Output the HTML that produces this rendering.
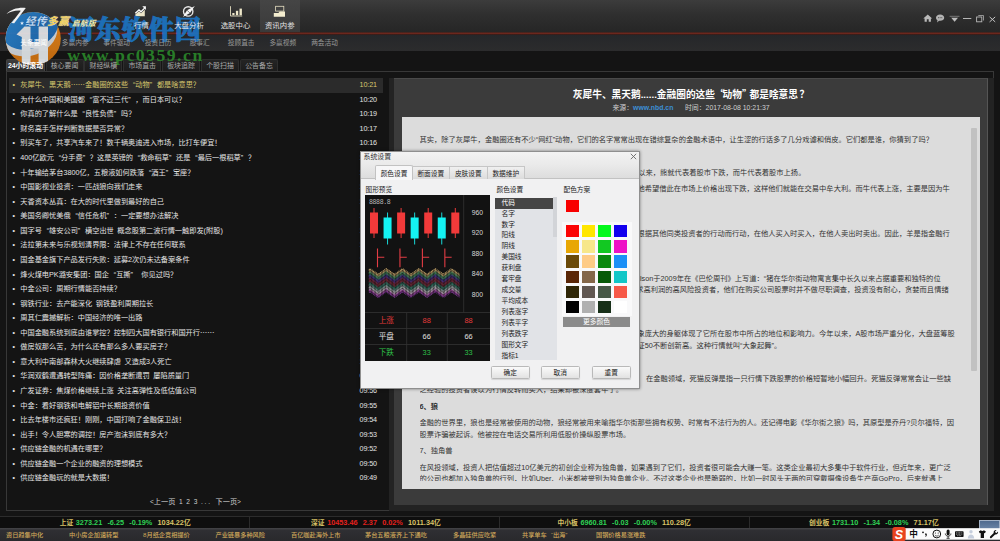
<!DOCTYPE html>
<html lang="zh-CN">
<head>
<meta charset="utf-8">
<title>经传多赢 启航版 - 资讯内参</title>
<style>
*{box-sizing:border-box;margin:0;padding:0}
html,body{width:1000px;height:541px;overflow:hidden;background:#141414}
body{position:relative;font-family:"Liberation Sans","Noto Sans CJK SC",sans-serif;font-size:7.2px;color:#ddd;-webkit-text-size-adjust:none}
i{font-style:normal}
.abs{position:absolute}
/* ---------- top bar ---------- */
#top{position:absolute;left:0;top:0;width:1000px;height:32px;background:linear-gradient(#3c3c3c,#2f2f2f 45%,#262626)}
#redline{position:absolute;left:0;top:31.6px;width:1000px;height:3.6px;background:linear-gradient(#2c1f1d,#762a1f 42%,#5a211a 64%,#1e1a1a)}
#brand{z-index:5;position:absolute;left:25px;top:14.600px;font-size:10.600px;font-weight:bold;font-style:italic;color:#bcd6f0;text-shadow:0 0 1px #1b4f86,0 0 1px #1b4f86;letter-spacing:.5px;white-space:nowrap;line-height:12px}
#brand i{font-style:italic;color:#f1cf58;text-shadow:0 0 1px #fff}
#brand2{z-index:5;position:absolute;left:72px;top:18.600px;font-size:7.600px;font-weight:bold;font-style:italic;color:#f2ecb0;letter-spacing:.4px;white-space:nowrap;line-height:9px}
.nav{position:absolute;top:0;height:32px;width:40px;text-align:center;color:#f2f2f2;font-size:7.4px;white-space:nowrap}
.nav span{z-index:3;opacity:.92;position:absolute;left:0;right:0;top:21px;line-height:10px}
.nav svg{position:absolute;left:13px;top:5px}
.nav.on{background:linear-gradient(#454545,#3a3a3a)}
#winbtn{position:absolute;left:918px;top:10px}
/* ---------- sub nav ---------- */
#sub{position:absolute;left:0;top:35px;width:1000px;height:15.5px;background:linear-gradient(#25272a,#2c2c2d)}
#sub span{z-index:3;position:absolute;top:0;width:42px;text-align:center;line-height:15.5px;font-size:6.7px;color:#9a9a9a;white-space:nowrap}
#sub span.on{color:#fff}
/* ---------- tabs ---------- */
#tabs{position:absolute;left:6px;top:59px;height:12px;white-space:nowrap}
.tab{position:absolute;top:0;height:12px;width:38px;border:1px solid #2e2e2e;border-bottom:none;border-radius:2px 2px 0 0;background:linear-gradient(#242424,#1c1c1c);color:#a9a9a9;text-align:center;line-height:11px;font-size:6.9px}
.tab span{position:relative;z-index:3}
.tab.on{background:linear-gradient(#3d3d3d,#303030);border-color:#444;color:#fff;font-weight:bold}
#frame{position:absolute;left:6px;top:71px;width:988px;height:440px;border:1px solid #383838;background:#141414}
/* ---------- list ---------- */
#list{position:absolute;left:9px;top:78.2px;width:374px}
.row{position:relative;height:14.57px;line-height:14.57px;white-space:nowrap;color:#e4e4e4;font-size:7.2px}
.row.sel{background:#2b2b2b;color:#d9c96e}
.row .dot{position:absolute;left:3.5px;top:0;font-size:7px}
.row .t{position:absolute;left:11.3px;top:0;word-spacing:1.6px}
.row .tm{position:absolute;left:350.5px;top:0;font-size:7.2px;letter-spacing:-.1px}
.el{font-family:"Noto Sans CJK SC",sans-serif;line-height:0}
.ql,.qr{display:inline-block;width:7.2px}
.ql{text-align:right}
.qr{text-align:left}
#pager{position:absolute;left:150px;top:497.400px;font-size:7.200px;color:#cfcfcf;line-height:10px;white-space:pre}
#pager i{font-size:6.600px;word-spacing:1.800px}
#pager u{text-decoration:none;letter-spacing:1.800px}
/* ---------- article ---------- */
#split{position:absolute;left:389px;top:78px;width:605px;height:432.5px;background:#232323}
#art{position:absolute;left:394px;top:78px;width:594px;height:427px;background:#3b3b3b;border-top:1px solid #4a4a4a;border-right:1px solid #555}
#art h1{position:absolute;left:0;top:9px;width:594px;text-align:center;font-size:9.7px;line-height:13px;color:#fff;font-weight:bold;white-space:nowrap}
.hq{display:inline-block;width:7.6px;text-align:left}
#meta{position:absolute;left:0;top:24px;width:594px;text-align:center;font-size:6.9px;line-height:10px;color:#d0d0d0;white-space:pre}
#meta b{color:#3d8fd6}
#paper{position:absolute;left:8px;top:38px;width:578px;height:372px;background:#dcdcdc}
#txt{position:absolute;left:17.5px;top:17.2px;width:555px;height:347px;overflow:hidden;color:#333;font-size:7.28px;line-height:11.4px}
#txt p{margin:0 0 5.1px 0;white-space:nowrap}
#txt p.h{font-weight:bold}
#txt p.u1{position:relative;top:-.9px}
#sbar{position:absolute;left:569px;top:11.3px;width:5.5px;height:242.5px;background:#c1c1c1;border-radius:1px}
/* ---------- bottom ---------- */
#stat{position:absolute;left:0;top:515.5px;width:1000px;height:12.5px;background:#0e0e0e;border-top:1px solid #2c2c2c}
.sep{position:absolute;top:0;width:1px;height:12px;background:#2b2b2b}
.ix{position:absolute;top:1.9px;white-space:pre;font-weight:bold;font-size:7.3px;line-height:10px;color:#d8c267;word-spacing:.57px}
.ix i{font-size:6.75px}
.ix .g{color:#2fd155}.ix .r{color:#e3201d}
#tick{position:absolute;left:0;top:528px;width:1000px;height:13px;background:linear-gradient(#454548,#2f2f33 18%,#29292c)}
#tick span{position:absolute;top:1.7px;line-height:10px;font-size:6.2px;font-weight:500;color:#d0a85a;white-space:nowrap}
#ime{position:absolute;left:892px;top:527px;width:108px;height:14px}
#mon{position:absolute;left:979px;top:520px;width:21px;height:8.500px;background:linear-gradient(#4f6a8e,#6a84a6);border:1.6px solid #a3b1c5;border-bottom:none}
/* ---------- dialog ---------- */
#dlg{position:absolute;left:360px;top:151px;width:280px;height:238px;background:linear-gradient(#f3f3f3,#e9e9e9 14px,#dcdcdc 27px,#f1f1f2 27.5px);border:1px solid #8f8f8f;color:#222;font-size:6.7px;box-shadow:0 0 3px rgba(0,0,0,.45)}
#dlg .ttl{position:absolute;left:2.500px;top:.2px;font-size:6.9px;line-height:10px;color:#333}
#dlg .x{position:absolute;left:268.5px;top:1.3px}
#strip{position:absolute;left:0;top:13px;width:278px;height:14px;border-bottom:1px solid #c2c2c2}
.dt{position:absolute;top:1px;height:13px;width:37.5px;text-align:center;line-height:13.3px;border:1px solid #c6c6c6;border-bottom:none;border-left:none;background:linear-gradient(#f0f0f0,#dcdcdc);color:#222;white-space:nowrap}
.dt.on{top:-.5px;height:15px;background:#f7f7f8;border:1px solid #c2c2c2;border-bottom:none;border-radius:2px 2px 0 0;line-height:15px}
.lbl{position:absolute;line-height:10px;color:#222;white-space:nowrap}
#chart{position:absolute;left:4px;top:42.5px;width:125px;height:166.5px;background:#121212}
#clist{position:absolute;left:134px;top:45.700px;width:62px;height:162px;background:#e1e3e7}
#clist div{height:10.930px;line-height:10.930px;padding-left:6.5px;color:#222;white-space:nowrap}
#clist div.on{background:#454545;color:#fff}
#cscroll{position:absolute;left:192px;top:45px;width:4px;height:40px;background:#d2d4d8}
.sw{position:absolute;width:13.3px;height:12.3px}
#more{position:absolute;left:202px;top:164.5px;width:67px;height:10px;background:#8b8b8b;color:#fff;text-align:center;line-height:9.5px;font-size:6.8px}
.btn{position:absolute;top:214.400px;width:39.5px;height:12.5px;border:1px solid #b9b9b9;border-radius:1.5px;background:linear-gradient(#fafafa,#e2e2e2);text-align:center;line-height:11px;color:#222;box-shadow:0 1px 1px rgba(0,0,0,.12)}
/* ---------- watermark ---------- */
#wm1{z-index:2;position:absolute;left:68px;top:11px;font-family:"Liberation Serif","Noto Serif CJK SC",serif;font-weight:900;font-size:25.8px;line-height:40px;color:#1c74c2;opacity:.92;white-space:nowrap;letter-spacing:.95px;-webkit-text-stroke:.9px #1c74c2}
#wm2{z-index:2;position:absolute;left:67.3px;top:42.6px;font-family:"Liberation Serif",serif;font-weight:bold;font-size:17.7px;line-height:24px;color:#2b8b2b;opacity:.88;white-space:nowrap;letter-spacing:1.5px}
#wmlogo{z-index:2;position:absolute;left:4px;top:10px}
</style>
</head>
<body>
<!-- ================= top bar ================= -->
<div id="top">
  <svg class="abs" style="left:5px;top:6px;z-index:5" width="24" height="19" viewBox="0 0 24 19"><path d="M1.500 8C6 3.300 13 1.300 20.800 2L9.200 17.300l-2.700-.3L15.800 4.700C10.500 4.200 5.500 5.600 1.500 8z" fill="#f1f1f1"/><path d="M17 15.200l.6 1.300 1.400.1-1.100.9.400 1.400-1.300-.8-1.200.8.300-1.400-1-.9 1.400-.1z" fill="#dfe9f6"/></svg>
  <div id="brand">经传<i>多赢</i></div>
  <div id="brand2">启航版</div>
  <div class="nav" style="left:121.5px"><svg style="left:11.500px" width="14" height="12" viewBox="0 0 14 12"><path d="M2.300 11.200V9.600l3.700-3.300 2 2 3.800-3.600v6.500z" fill="#ece5c8"/><path d="M2.300 8.300L6 4.800l2 2 3.600-3.700" stroke="#fff" stroke-width="1.250" fill="none"/><path d="M9.300 1.300h3.600v3.600z" fill="#fff"/></svg><span>行情</span></div>
  <div class="nav" style="left:169px"><svg width="14" height="12" viewBox="0 0 14 12"><circle cx="6.200" cy="6.400" r="4.700" stroke="#e6e6e6" stroke-width="1.350" fill="none"/><path d="M1 12L5 5.200 12.800 1 8 8z" fill="#f6f6f6"/><path d="M5 5.200L8 8" stroke="#333" stroke-width=".6"/></svg><span>大盘分析</span></div>
  <div class="nav" style="left:215.5px"><svg width="14" height="12" viewBox="0 0 14 12"><path d="M1.500 1.200V11H13.200" stroke="#e3dcc0" stroke-width=".9" fill="none"/><rect x="3.300" y="8" width="2.200" height="2.200" fill="#efe8ca"/><rect x="6.900" y="5.800" width="2.300" height="4.400" fill="#efe8ca"/><rect x="10.500" y="3.600" width="2.400" height="6.600" fill="#efe8ca"/></svg><span>选股中心</span></div>
  <div class="nav on" style="left:260px;width:39.5px"><svg width="14" height="12" viewBox="0 0 14 12"><rect x="2.600" y="1.300" width="8.200" height="4.800" stroke="#e4ddc0" stroke-width=".8" fill="none"/><path d="M.8 11.700V8h4.600l1.200-1.400H12V11.700z" fill="#f4edcf"/></svg><span>资讯内参</span></div>
  <svg id="winbtn" width="80" height="16" viewBox="0 0 80 16">
    <path d="M5.300 8.400L9.750 4.400l4.450 4h-1.300v3.400h-2.200V9.200H8.800v2.600H6.600V8.400z" fill="#b9b9b9"/>
    <path d="M22.100 4.600c2.400 0 4.100 1.400 4.100 3.100s-1.700 3.100-4.100 3.100c-.4 0-.8 0-1.100-.1l-1.900 1.700.4-2.200c-.9-.6-1.500-1.500-1.500-2.500 0-1.700 1.700-3.100 4.100-3.100z" fill="#b4b4b4"/>
    <path d="M20.400 7.700h.01M22.100 7.700h.01M23.800 7.700h.01" stroke="#3a3a3a" stroke-width="1" stroke-linecap="round"/>
    <path d="M31.600 6.300h9.900" stroke="#8a8a8a" stroke-width=".8"/><path d="M33.200 7.700h6.800l-3.400 4z" fill="#bdbdbd"/>
    <path d="M45 8.500h8.300" stroke="#b5b5b5" stroke-width="1"/>
    <path d="M60.300 5.500h5.200v5" stroke="#a0a0a0" stroke-width=".9" fill="none"/><rect x="58.600" y="7" width="5.200" height="4.800" stroke="#b8b8b8" stroke-width=".9" fill="none"/>
    <path d="M71.600 6.900l5.600 5M77.200 6.900l-5.600 5" stroke="#c4c4c4" stroke-width="1"/>
  </svg>
</div>
<div id="redline"></div>
<!-- ================= sub nav ================= -->
<div id="sub">
  <span class="on" style="left:12.700px">头条要闻</span>
  <span style="left:54.200px">多赢内参</span>
  <span style="left:95.700px">事件驱动</span>
  <span style="left:137.200px">投资日历</span>
  <span style="left:178.700px">股事汇</span>
  <span style="left:220.200px">投顾直击</span>
  <span style="left:261.800px">多赢视频</span>
  <span style="left:303.500px">两会活动</span>
</div>
<!-- ================= frame / tabs ================= -->
<div id="frame"></div>
<div id="tabs">
  <div class="tab on" style="left:0;width:39px"><span>24小时滚动</span></div>
  <div class="tab" style="left:39.500px"><span>核心要闻</span></div>
  <div class="tab" style="left:78.300px"><span>财经纵横</span></div>
  <div class="tab" style="left:117.200px"><span>市场直击</span></div>
  <div class="tab" style="left:156px"><span>板块追踪</span></div>
  <div class="tab" style="left:195px"><span>个股扫描</span></div>
  <div class="tab" style="left:234px"><span>公告备忘</span></div>
</div>
<!-- ================= news list ================= -->
<div id="list">
<div class="row sel"><b class="dot">•</b><span class="t">灰犀牛、黑天鹅<i class="el">……</i>金融圈的这些<i class="ql">“</i>动物<i class="qr">”</i>都是啥意思？</span><span class="tm">10:21</span></div>
<div class="row"><b class="dot">•</b><span class="t">为什么中国和美国都<i class="ql">“</i>富不过三代<i class="qr">”</i>，而日本可以？</span><span class="tm">10:20</span></div>
<div class="row"><b class="dot">•</b><span class="t">你真的了解什么是<i class="ql">“</i>良性负债<i class="qr">”</i>吗？</span><span class="tm">10:19</span></div>
<div class="row"><b class="dot">•</b><span class="t">财务高手怎样判断数据是否异常？</span><span class="tm">10:17</span></div>
<div class="row"><b class="dot">•</b><span class="t">别买车了，共享汽车来了！数千辆奥迪进入市场，比打车便宜！</span><span class="tm">10:16</span></div>
<div class="row"><b class="dot">•</b><span class="t">400亿欧元<i class="ql">“</i>分手费<i class="qr">”</i>？这是英镑的<i class="ql">“</i>救命稻草<i class="qr">”</i>还是<i class="ql">“</i>最后一根稻草<i class="qr">”</i>？</span><span class="tm">10:15</span></div>
<div class="row"><b class="dot">•</b><span class="t">十年输给茅台3800亿，五粮液如何跌落<i class="ql">“</i>酒王<i class="qr">”</i>宝座？</span><span class="tm">10:14</span></div>
<div class="row"><b class="dot">•</b><span class="t">中国影视业投资：一匹战狼向我们走来</span><span class="tm">10:13</span></div>
<div class="row"><b class="dot">•</b><span class="t">天香资本丛真：在大的时代里做到最好的自己</span><span class="tm">10:12</span></div>
<div class="row"><b class="dot">•</b><span class="t">美国务卿忧美俄<i class="ql">“</i>信任危机<i class="qr">”</i>：一定要想办法解决</span><span class="tm">10:11</span></div>
<div class="row"><b class="dot">•</b><span class="t">国字号<i class="ql">“</i>雄安公司<i class="qr">”</i>横空出世 概念股第二波行情一触即发(附股)</span><span class="tm">10:10</span></div>
<div class="row"><b class="dot">•</b><span class="t">法拉第未来与乐视划清界限：法律上不存在任何联系</span><span class="tm">10:08</span></div>
<div class="row"><b class="dot">•</b><span class="t">国金基金旗下产品发行失败：延募2次仍未达备案条件</span><span class="tm">10:07</span></div>
<div class="row"><b class="dot">•</b><span class="t">烽火煤电PK潞安集团：国企<i class="ql">“</i>互撕<i class="qr">”</i> 你见过吗？</span><span class="tm">10:06</span></div>
<div class="row"><b class="dot">•</b><span class="t">中金公司：周期行情能否持续？</span><span class="tm">10:05</span></div>
<div class="row"><b class="dot">•</b><span class="t">钢铁行业：去产能深化 钢铁盈利周期拉长</span><span class="tm">10:04</span></div>
<div class="row"><b class="dot">•</b><span class="t">周其仁震撼解析：中国经济的唯一出路</span><span class="tm">10:03</span></div>
<div class="row"><b class="dot">•</b><span class="t">中国金融系统到底由谁掌控？控制四大国有银行和国开行<i class="el">……</i></span><span class="tm">10:02</span></div>
<div class="row"><b class="dot">•</b><span class="t">做房奴那么苦，为什么还有那么多人要买房子？</span><span class="tm">10:01</span></div>
<div class="row"><b class="dot">•</b><span class="t">意大利中南部森林大火继续肆虐 又造成3人死亡</span><span class="tm">10:00</span></div>
<div class="row"><b class="dot">•</b><span class="t">华润双鹤遭遇转型阵痛：因价格垄断遭罚 屡陷质量门</span><span class="tm">09:58</span></div>
<div class="row"><b class="dot">•</b><span class="t">广发证券：焦煤价格继续上涨 关注高弹性及低估值公司</span><span class="tm">09:56</span></div>
<div class="row"><b class="dot">•</b><span class="t">中金：看好钢铁和电解铝中长期投资价值</span><span class="tm">09:55</span></div>
<div class="row"><b class="dot">•</b><span class="t">比去年楼市还疯狂！刚刚，中国打响了金融保卫战！</span><span class="tm">09:54</span></div>
<div class="row"><b class="dot">•</b><span class="t">出手！令人胆寒的调控！房产泡沫到底有多大？</span><span class="tm">09:53</span></div>
<div class="row"><b class="dot">•</b><span class="t">供应链金融的机遇在哪里？</span><span class="tm">09:52</span></div>
<div class="row"><b class="dot">•</b><span class="t">供应链金融一个企业的融资的理想模式</span><span class="tm">09:50</span></div>
<div class="row"><b class="dot">•</b><span class="t">供应链金融玩的就是大数据！</span><span class="tm">09:49</span></div>

</div>
<div id="pager"><i>&lt;</i>上一页<i> 1 2 3 <u>...</u> </i>下一页<i>&gt;</i></div>
<!-- ================= article ================= -->
<div id="split"></div>
<div id="art">
  <h1>灰犀牛、黑天鹅......金融圈的这些<i class="hq el" style="text-align:right">“</i>动物<i class="hq el">”</i>都是啥意思<i style="margin-left:1.500px">？</i></h1>
  <div id="meta">来源：<b>www.nbd.cn</b>      时间：2017-08-08 10:21:37</div>
  <div id="paper">
    <div id="txt">
<p>其实，除了灰犀牛，金融圈还有不少“网红”动物，它们的名字常常出现在错综复杂的金融术语中，让生涩的行话多了几分戏谑和俏皮。它们都是谁，你猜到了吗？</p>
<p class="h">1、熊和牛</p>
<p>这两种动物是股市里最为常见、也最为人们所熟知的一对，自18世纪以来，熊就代表着股市下跌，而牛代表着股市上扬。</p>
<p class="u1">熊代表下跌是因为卖熊皮的中间商在还没有拿到熊皮时就先行卖出，他希望借此在市场上价格出现下跌，这样他们就能在交易中牟大利。而牛代表上涨，主要是因为牛<br>在攻击时牛角总是由下往上顶。</p>
<p class="h">2、羊</p>
<p>羊是最为典型的群居动物，它们往往没有自己的独立主见，只会一味根据其他同类投资者的行动而行动，在他人买入时买入，在他人卖出时卖出。因此，羊是指金融行<br>业中那些盲目跟风的投资者。</p>
<p class="h">3、猪</p>
<p>美国最为知名的财经专栏作家、该刊前任主编艾伦·阿贝尔森Alan Abelson于2009年在《巴伦周刊》上写道：“猪在华尔街动物寓言集中长久以来占据重要和独特的位<br>置。”在金融投资领域里，猪通常就是指那些不顾一切、贪得无厌、追求高利润的高风险投资者，他们在购买公司股票时并不做尽职调查，投资没有耐心，贪婪而且情绪<br>化，常常成为亏损最多的人。</p>
<p class="h">4、大象</p>
<p>在股市里，大象是指那些资金体量大的机构投资者或大盘蓝筹股，大象庞大的身躯体现了它所在股市中所占的地位和影响力。今年以来，A股市场严重分化，大盘蓝筹股<br>持续走强，以银行、保险、白酒等为代表的权重股轮番上涨，带动上证50不断创新高。这种行情就叫“大象起舞”。</p>
<p class="h">5、死猫</p>
<p>华尔街上有一句名言：“即使是一只死猫，从足够高处落下也会弹起”。　在金融领域，死猫反弹是指一只行情下跌股票的价格短暂地小幅回升。死猫反弹常常会让一些缺<br>乏经验的投资者误以为行情反转而买入，结果却被深度套牢了。</p>
<p class="h">6、狼</p>
<p>金融的世界里，狼也是经常被使用的动物，狼经常被用来喻指华尔街那些拥有权势、时常有不法行为的人。还记得电影《华尔街之狼》吗，其原型是乔丹?贝尔福特，因<br>股票诈骗被起诉。他被控在电话交易所利用低股价操纵股票市场。</p>
<p>7、独角兽</p>
<p>在风投领域，投资人把估值超过10亿美元的初创企业称为独角兽，如果遇到了它们，投资者很可能会大赚一笔。这类企业最初大多集中于软件行业，但近年来，更广泛<br>的公司也都加入独角兽的行列，比如Uber、小米都被誉别为独角兽企业。不过这类企业也是脆弱的，比如一时风头无两的可穿戴摄像设备生产商GoPro，后来就遇上</p>
    </div>
    <div id="sbar"></div>
  </div>
</div>
<!-- ================= bottom bars ================= -->
<div id="stat">
  <b class="sep" style="left:249px"></b><b class="sep" style="left:499px"></b><b class="sep" style="left:749px"></b>
  <div class="ix" style="left:59.700px"><i>上证</i> <span class="g">3273.21  -6.25  -0.19%</span>  1034.22<i>亿</i></div>
  <div class="ix" style="left:311px"><i>深证</i> <span class="r">10453.46  2.37  0.02%</span>  1011.34<i>亿</i></div>
  <div class="ix" style="left:557.500px"><i>中小板</i> <span class="g">6960.81  -0.03  -0.00%</span>  110.28<i>亿</i></div>
  <div class="ix" style="left:809px"><i>创业板</i> <span class="g">1731.10  -1.34  -0.08%</span>  71.17<i>亿</i></div>
</div>
<div id="tick">
  <span style="left:6px">资日趋集中化</span>
  <span style="left:69px">中小房企加速转型</span>
  <span style="left:143px">8月纸企竞相提价</span>
  <span style="left:215.500px">产业链暴多种风险</span>
  <span style="left:291px">百亿咖赴海外上市</span>
  <span style="left:365px">茅台五粮液齐上下通吃</span>
  <span style="left:453px">多晶硅供应吃紧</span>
  <span style="left:522px">共享单车<i class="ql" style="width:6.200px">“</i>出海<i class="qr" style="width:6.200px">”</i></span>
  <span style="left:596px">国钢价格易涨难跌</span>
</div>
<div id="mon"></div>
<div id="ime">
  <svg class="abs" style="left:0;top:0" width="108" height="14" viewBox="0 0 108 14" font-family="Liberation Sans, Noto Sans CJK SC, sans-serif">
    <rect x="13" y="1.200" width="95" height="11.500" fill="#fbfbfb"/>
    <rect x=".4" y="0" width="13.300" height="14" rx="2.600" fill="#e8431f"/>
    <text x="7" y="11.600" font-size="12.500" font-weight="bold" fill="#fff" text-anchor="middle" font-style="italic">S</text>
    <text x="21.600" y="10.300" font-size="8.600" font-weight="bold" fill="#111" text-anchor="middle">中</text>
    <circle cx="31" cy="5.300" r=".9" fill="#111"/><path d="M33.800 6.200c.9.200 1.300 1 .9 2.200l-.7 1.400h-.7l.5-1.600c-.6-.2-.8-.7-.7-1.200.1-.5.400-.8.700-.8z" fill="#111"/>
    <circle cx="44.800" cy="7" r="3.900" fill="none" stroke="#111" stroke-width="1"/><circle cx="43.400" cy="6" r=".55" fill="#111"/><circle cx="46.200" cy="6" r=".55" fill="#111"/><path d="M42.900 8.100c1 1.300 2.800 1.300 3.800 0" stroke="#111" stroke-width=".7" fill="none"/>
    <rect x="54.600" y="2.600" width="3" height="5.600" rx="1.500" fill="#111"/><path d="M53.300 6.500c0 3.600 5.600 3.600 5.600 0M56.100 9.200v2M54.500 11.300h3.200" stroke="#111" stroke-width=".8" fill="none"/>
    <rect x="63" y="4.300" width="8.600" height="5.800" rx=".8" fill="#111"/><path d="M64.200 5.800h6.200M64.200 7.200h6.200M65.300 8.700h4" stroke="#fbfbfb" stroke-width=".6" stroke-dasharray=".9 .6"/>
    <circle cx="79" cy="4.700" r="1.700" fill="#c5cedd"/><path d="M75.800 11.500c0-5.200 6.400-5.200 6.400 0z" fill="#c5cedd"/>
    <path d="M86.800 4.600l2-1.400c.9.900 2.200.9 3.100 0l2 1.400-1 1.700-.9-.4v5.200h-3.300V5.900l-.9.400z" fill="#111"/>
    <path d="M104.600 3.100a2.300 2.300 0 0 0-2.900 2.900l-3.600 3.600a1 1 0 0 0 1.400 1.400l3.600-3.600a2.300 2.300 0 0 0 2.900-2.900l-1.400 1.400-1.200-.3-.3-1.200z" fill="#111"/>
  </svg>
</div>
<div id="dlg">
<div class="ttl">系统设置</div>
<svg class="x" width="7" height="7" viewBox="0 0 7 7"><path d="M.8 .8l5.4 5.4M6.200 .8L.8 6.200" stroke="#666" stroke-width=".9"/></svg>
<div id="strip">
<div class="dt on" style="left:14px;width:38px">颜色设置</div>
<div class="dt" style="left:51.5px">断面设置</div>
<div class="dt" style="left:89px">皮肤设置</div>
<div class="dt" style="left:126.5px">数据维护</div>
</div>
<div class="lbl" style="left:4.5px;top:32.7px">图形预览</div>
<div class="lbl" style="left:135.5px;top:32.7px">颜色设置</div>
<div class="lbl" style="left:202.5px;top:32.7px">配色方案</div>
<svg id="chart" width="125" height="166.5" viewBox="0 0 125 166.5" font-family="Liberation Sans, Noto Sans CJK SC, sans-serif">
<rect width="125" height="166.5" fill="#121212"/>
<path d="M98.7 0V117.5M0 117.5H125M0 133.5H125M0 149.5H125M41.7 117.5V166.5M82.3 117.5V166.5" stroke="#333" stroke-width=".8" fill="none"/>
<text x="4" y="9.3" font-size="6.6" fill="#b9b9b9" font-family="Liberation Mono, monospace" letter-spacing="-.4">8888.8</text>
<path d="M9.00 13V43" stroke="#ee3a3a" stroke-width="1"/>
<rect x="5.00" y="17.5" width="8" height="21" fill="#f23a3a"/>
<path d="M22.55 17.5V49.5" stroke="#18d8d8" stroke-width="1"/>
<rect x="18.55" y="22.5" width="8" height="21" fill="#14f2f2"/>
<path d="M36.10 13V43" stroke="#ee3a3a" stroke-width="1"/>
<rect x="32.10" y="17.5" width="8" height="21" fill="#f23a3a"/>
<path d="M49.65 17.5V49.5" stroke="#18d8d8" stroke-width="1"/>
<rect x="45.65" y="22.5" width="8" height="21" fill="#14f2f2"/>
<path d="M63.20 13V43" stroke="#ee3a3a" stroke-width="1"/>
<rect x="59.20" y="17.5" width="8" height="21" fill="#f23a3a"/>
<path d="M76.75 17.5V49.5" stroke="#18d8d8" stroke-width="1"/>
<rect x="72.75" y="22.5" width="8" height="21" fill="#14f2f2"/>
<path d="M90.30 13V43" stroke="#ee3a3a" stroke-width="1"/>
<rect x="86.30" y="17.5" width="8" height="21" fill="#f23a3a"/>
<path d="M12.50 53.5V72.2M12.50 62.2H19.30" stroke="#e23c44" stroke-width="1.1" fill="none"/>
<path d="M34.95 53.5V72.2M34.95 62.2H41.75" stroke="#e23c44" stroke-width="1.1" fill="none"/>
<path d="M57.40 53.5V72.2M57.40 62.2H64.20" stroke="#e23c44" stroke-width="1.1" fill="none"/>
<path d="M79.85 53.5V72.2M79.85 62.2H86.65" stroke="#e23c44" stroke-width="1.1" fill="none"/>
<path d="M4.00 74.73 L5.00 73.90 L13.15 79.40 L21.30 73.90 L29.45 79.40 L37.60 73.90 L45.75 79.40 L53.90 73.90 L62.05 79.40 L70.20 73.90 L78.35 79.40 L86.50 73.90 L94.50 79.30" stroke="#c4a468" stroke-width="1.5" fill="none" stroke-dasharray="1 .7" opacity=".92"/>
<path d="M4.00 76.25 L5.00 75.42 L13.15 80.92 L21.30 75.42 L29.45 80.92 L37.60 75.42 L45.75 80.92 L53.90 75.42 L62.05 80.92 L70.20 75.42 L78.35 80.92 L86.50 75.42 L94.50 80.82" stroke="#b4955e" stroke-width="1.5" fill="none" stroke-dasharray="1 .7" opacity=".92"/>
<path d="M4.00 77.77 L5.00 76.94 L13.15 82.44 L21.30 76.94 L29.45 82.44 L37.60 76.94 L45.75 82.44 L53.90 76.94 L62.05 82.44 L70.20 76.94 L78.35 82.44 L86.50 76.94 L94.50 82.34" stroke="#578f62" stroke-width="1.5" fill="none" stroke-dasharray="1 .7" opacity=".92"/>
<path d="M4.00 79.29 L5.00 78.46 L13.15 83.96 L21.30 78.46 L29.45 83.96 L37.60 78.46 L45.75 83.96 L53.90 78.46 L62.05 83.96 L70.20 78.46 L78.35 83.96 L86.50 78.46 L94.50 83.86" stroke="#3b7f5a" stroke-width="1.5" fill="none" stroke-dasharray="1 .7" opacity=".92"/>
<path d="M4.00 80.81 L5.00 79.98 L13.15 85.48 L21.30 79.98 L29.45 85.48 L37.60 79.98 L45.75 85.48 L53.90 79.98 L62.05 85.48 L70.20 79.98 L78.35 85.48 L86.50 79.98 L94.50 85.38" stroke="#3f3f82" stroke-width="1.5" fill="none" stroke-dasharray="1 .7" opacity=".92"/>
<path d="M4.00 82.33 L5.00 81.50 L13.15 87.00 L21.30 81.50 L29.45 87.00 L37.60 81.50 L45.75 87.00 L53.90 81.50 L62.05 87.00 L70.20 81.50 L78.35 87.00 L86.50 81.50 L94.50 86.90" stroke="#4b2c84" stroke-width="1.5" fill="none" stroke-dasharray="1 .7" opacity=".92"/>
<path d="M4.00 83.85 L5.00 83.02 L13.15 88.52 L21.30 83.02 L29.45 88.52 L37.60 83.02 L45.75 88.52 L53.90 83.02 L62.05 88.52 L70.20 83.02 L78.35 88.52 L86.50 83.02 L94.50 88.42" stroke="#6c264c" stroke-width="1.5" fill="none" stroke-dasharray="1 .7" opacity=".92"/>
<path d="M4.00 85.37 L5.00 84.54 L13.15 90.04 L21.30 84.54 L29.45 90.04 L37.60 84.54 L45.75 90.04 L53.90 84.54 L62.05 90.04 L70.20 84.54 L78.35 90.04 L86.50 84.54 L94.50 89.94" stroke="#7c2634" stroke-width="1.5" fill="none" stroke-dasharray="1 .7" opacity=".92"/>
<path d="M4.00 86.89 L5.00 86.06 L13.15 91.56 L21.30 86.06 L29.45 91.56 L37.60 86.06 L45.75 91.56 L53.90 86.06 L62.05 91.56 L70.20 86.06 L78.35 91.56 L86.50 86.06 L94.50 91.46" stroke="#6c2c3a" stroke-width="1.5" fill="none" stroke-dasharray="1 .7" opacity=".92"/>
<path d="M4.00 88.41 L5.00 87.58 L13.15 93.08 L21.30 87.58 L29.45 93.08 L37.60 87.58 L45.75 93.08 L53.90 87.58 L62.05 93.08 L70.20 87.58 L78.35 93.08 L86.50 87.58 L94.50 92.98" stroke="#2f6c5e" stroke-width="1.5" fill="none" stroke-dasharray="1 .7" opacity=".92"/>
<path d="M4.00 89.93 L5.00 89.10 L13.15 94.60 L21.30 89.10 L29.45 94.60 L37.60 89.10 L45.75 94.60 L53.90 89.10 L62.05 94.60 L70.20 89.10 L78.35 94.60 L86.50 89.10 L94.50 94.50" stroke="#3b7c6a" stroke-width="1.5" fill="none" stroke-dasharray="1 .7" opacity=".92"/>
<path d="M4.00 91.45 L5.00 90.62 L13.15 96.12 L21.30 90.62 L29.45 96.12 L37.60 90.62 L45.75 96.12 L53.90 90.62 L62.05 96.12 L70.20 90.62 L78.35 96.12 L86.50 90.62 L94.50 96.02" stroke="#86989a" stroke-width="1.5" fill="none" stroke-dasharray="1 .7" opacity=".92"/>
<path d="M4.00 92.97 L5.00 92.14 L13.15 97.64 L21.30 92.14 L29.45 97.64 L37.60 92.14 L45.75 97.64 L53.90 92.14 L62.05 97.64 L70.20 92.14 L78.35 97.64 L86.50 92.14 L94.50 97.54" stroke="#b4b4b4" stroke-width="1.5" fill="none" stroke-dasharray="1 .7" opacity=".92"/>
<path d="M4.00 94.49 L5.00 93.66 L13.15 99.16 L21.30 93.66 L29.45 99.16 L37.60 93.66 L45.75 99.16 L53.90 93.66 L62.05 99.16 L70.20 93.66 L78.35 99.16 L86.50 93.66 L94.50 99.06" stroke="#ba9cba" stroke-width="1.5" fill="none" stroke-dasharray="1 .7" opacity=".92"/>
<path d="M4.00 96.01 L5.00 95.18 L13.15 100.68 L21.30 95.18 L29.45 100.68 L37.60 95.18 L45.75 100.68 L53.90 95.18 L62.05 100.68 L70.20 95.18 L78.35 100.68 L86.50 95.18 L94.50 100.58" stroke="#aa4caa" stroke-width="1.5" fill="none" stroke-dasharray="1 .7" opacity=".92"/>
<path d="M4.00 97.53 L5.00 96.70 L13.15 102.20 L21.30 96.70 L29.45 102.20 L37.60 96.70 L45.75 102.20 L53.90 96.70 L62.05 102.20 L70.20 96.70 L78.35 102.20 L86.50 96.70 L94.50 102.10" stroke="#7c3692" stroke-width="1.5" fill="none" stroke-dasharray="1 .7" opacity=".92"/>
<text x="106.8" y="19.60" font-size="6.8" fill="#d6d6d6">960</text>
<text x="106.8" y="40.15" font-size="6.8" fill="#d6d6d6">920</text>
<text x="106.8" y="60.70" font-size="6.8" fill="#d6d6d6">880</text>
<text x="106.8" y="81.25" font-size="6.8" fill="#d6d6d6">840</text>
<text x="106.8" y="101.80" font-size="6.8" fill="#d6d6d6">800</text>
<text x="21.3" y="128.10" font-size="7.6" fill="#e23b3b" text-anchor="middle">上涨</text>
<text x="61.7" y="128.10" font-size="7.4" fill="#e23b3b" text-anchor="middle">88</text>
<text x="103.6" y="128.10" font-size="7.4" fill="#e23b3b" text-anchor="middle">88</text>
<text x="21.3" y="144.10" font-size="7.6" fill="#e0e0e0" text-anchor="middle">平盘</text>
<text x="61.7" y="144.10" font-size="7.4" fill="#e0e0e0" text-anchor="middle">66</text>
<text x="103.6" y="144.10" font-size="7.4" fill="#e0e0e0" text-anchor="middle">66</text>
<text x="21.3" y="160.10" font-size="7.6" fill="#2fc24a" text-anchor="middle">下跌</text>
<text x="61.7" y="160.10" font-size="7.4" fill="#2fc24a" text-anchor="middle">33</text>
<text x="103.6" y="160.10" font-size="7.4" fill="#2fc24a" text-anchor="middle">33</text>
</svg>
<div id="clist">
<div class="on">代码</div>
<div>名字</div>
<div>数字</div>
<div>阳线</div>
<div>阴线</div>
<div>美国线</div>
<div>获利盘</div>
<div>套牢盘</div>
<div>成交量</div>
<div>平均成本</div>
<div>列表涨字</div>
<div>列表平字</div>
<div>列表跌字</div>
<div>图形文字</div>
<div>指标1</div>
</div>
<div id="cscroll"></div>
<div class="sw" style="left:204.8px;top:48.3px;background:#f80000;height:12.2px"></div>
<div class="abs" style="left:200.5px;top:69.5px;width:70px;height:94px;background:#f9f9fa"></div>
<div class="sw" style="left:204.6px;top:73.2px;background:#fb0404"></div>
<div class="sw" style="left:220.8px;top:73.2px;background:#ffe600"></div>
<div class="sw" style="left:236.9px;top:73.2px;background:#04f81c"></div>
<div class="sw" style="left:253.0px;top:73.2px;background:#1200ee"></div>
<div class="sw" style="left:204.6px;top:88.3px;background:#e8a704"></div>
<div class="sw" style="left:220.8px;top:88.3px;background:#f7e78a"></div>
<div class="sw" style="left:236.9px;top:88.3px;background:#12c822"></div>
<div class="sw" style="left:253.0px;top:88.3px;background:#ee12c6"></div>
<div class="sw" style="left:204.6px;top:103.4px;background:#6b4a08"></div>
<div class="sw" style="left:220.8px;top:103.4px;background:#fecb86"></div>
<div class="sw" style="left:236.9px;top:103.4px;background:#0b880f"></div>
<div class="sw" style="left:253.0px;top:103.4px;background:#1b8ff6"></div>
<div class="sw" style="left:204.6px;top:118.5px;background:#5b2707"></div>
<div class="sw" style="left:220.8px;top:118.5px;background:#846749"></div>
<div class="sw" style="left:236.9px;top:118.5px;background:#075a08"></div>
<div class="sw" style="left:253.0px;top:118.5px;background:#12c7c7"></div>
<div class="sw" style="left:204.6px;top:133.6px;background:#302707"></div>
<div class="sw" style="left:220.8px;top:133.6px;background:#605751"></div>
<div class="sw" style="left:236.9px;top:133.6px;background:#475847"></div>
<div class="sw" style="left:253.0px;top:133.6px;background:#f75948"></div>
<div class="sw" style="left:204.6px;top:148.7px;background:#000000"></div>
<div class="sw" style="left:220.8px;top:148.7px;background:#b0b0b0"></div>
<div class="sw" style="left:236.9px;top:148.7px;background:#172f18"></div>
<div class="sw" style="left:253.0px;top:148.7px;background:#ffffff"></div>
<div id="more">更多颜色</div>
<div class="btn" style="left:129.5px">确定</div>
<div class="btn" style="left:179.5px">取消</div>
<div class="btn" style="left:230.5px">重置</div>
</div>
<svg id="wmlogo" width="60" height="58" viewBox="0 0 60 58" opacity=".9">
<defs><linearGradient id="wg1" x1="0" y1="0" x2="1" y2="1"><stop offset="0" stop-color="#2b86cf"/><stop offset="1" stop-color="#1a64ad"/></linearGradient>
<linearGradient id="wg2" x1="0" y1="0" x2="0" y2="1"><stop offset="0" stop-color="#ea8a1c"/><stop offset="1" stop-color="#d0700e"/></linearGradient>
<clipPath id="wc"><ellipse cx="29.200" cy="28.500" rx="27.600" ry="26.500"/></clipPath></defs>
<g clip-path="url(#wc)">
<rect width="60" height="58" fill="url(#wg2)"/>
<ellipse cx="25.500" cy="24.500" rx="28.500" ry="21" transform="rotate(-20 25.500 24.500)" fill="#d4d9df"/>
<ellipse cx="26.500" cy="19" rx="28.500" ry="19.500" transform="rotate(-20 26.500 19)" fill="url(#wg1)"/>
<path d="M26.500 16.500 H20.500 L12.500 24.500 L17.800 27 V60 H26.500z" fill="#e6eaee"/>
<path d="M34.600 16.500 H44 V60 H34.600z" fill="#e6eaee"/>
<path d="M26 32 H35 V38.500 H26z" fill="#e6eaee"/>
</g>
</svg>
<div id="wm1">河东软件园</div>
<div id="wm2">www.pc0359.cn</div>
</body>
</html>
